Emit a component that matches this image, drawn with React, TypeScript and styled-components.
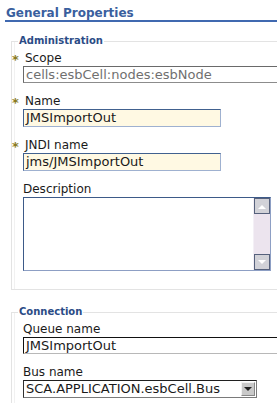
import React from "react";
import styled, { createGlobalStyle } from "styled-components";

const Global = createGlobalStyle`
  html, body {
    margin: 0;
    padding: 0;
    background: #ffffff;
    overflow: hidden;
  }
  body {
    font-family: "DejaVu Sans", Verdana, sans-serif;
    color: #1a1a1a;
  }
`;

const Page = styled.div`
  width: 277px;
  height: 403px;
  overflow: hidden;
`;

const Title = styled.h1`
  margin: 0 0 0 5px;
  padding: 6px 0 0 1px;
  font-size: 12px;
  line-height: 14px;
  font-weight: bold;
  color: #3a5f9e;
  border-bottom: 2px solid #4069b0;
`;

const Group = styled.fieldset<{ $top: number; $bottom: number }>`
  margin: ${(p) => p.$top}px 0 0 11px;
  padding: 4px 0 ${(p) => p.$bottom}px 11px;
  width: 300px;
  border: 1px solid #e3e3e3;
  border-right: none;
  box-shadow: inset 2px 0 0 #ffffff, inset 3px 0 0 #f1f1f1;
  min-width: 0;
`;

const Legend = styled.legend`
  margin-left: -5px;
  padding: 0 1px;
  font-size: 10px;
  line-height: 12px;
  font-weight: bold;
  color: #2b4c86;
`;

const Field = styled.div<{ $first?: boolean }>`
  display: flex;
  flex-direction: column;
  margin-top: ${(p) => (p.$first ? 0 : 11)}px;
`;

const Label = styled.label`
  display: block;
  font-size: 12px;
  line-height: 15px;
  height: 15px;
  color: #1a1a1a;
  white-space: nowrap;
`;

const Star = styled.span`
  display: inline-block;
  width: 13px;
  margin-left: -11px;
  color: #8a7b1d;
  font-weight: bold;
  font-size: 13px;
  vertical-align: -2px;
`;

const Input = styled.div<{
  $w?: number;
  $h: number;
  $bg: string;
  $color: string;
  $dark: string;
  $light: string;
}>`
  box-sizing: border-box;
  width: ${(p) => (p.$w ? `${p.$w}px` : "300px")};
  height: ${(p) => p.$h}px;
  background: ${(p) => p.$bg};
  border: 1px solid ${(p) => p.$light};
  border-top-color: ${(p) => p.$dark};
  border-left-color: ${(p) => p.$dark};
  padding: 0 0 0 2px;
  font-size: 13px;
  line-height: ${(p) => p.$h - 2}px;
  color: ${(p) => p.$color};
  white-space: nowrap;
  overflow: hidden;
`;

const AreaBox = styled.div`
  box-sizing: border-box;
  width: 248px;
  height: 74px;
  display: flex;
  border: 1px solid #8d9fc4;
  border-top-color: #3d5a88;
  border-left-color: #3d5a88;
  background: #ffffff;
`;

const Area = styled.textarea`
  flex: 1;
  border: none;
  margin: 0;
  padding: 0;
  resize: none;
  outline: none;
  background: #ffffff;
`;

const ScrollBar = styled.div`
  width: 16px;
  display: flex;
  flex-direction: column;
  justify-content: space-between;
  background: #ece4ee;
  border-left: 1px solid #f4f0f6;
`;

const ScrollButton = styled.div`
  box-sizing: border-box;
  width: 16px;
  height: 16px;
  border: 1px solid #56617c;
  background: #d2d2d8;
  display: flex;
  align-items: center;
  justify-content: center;
`;

const SelectBox = styled.div`
  box-sizing: border-box;
  width: 234px;
  height: 18px;
  display: flex;
  align-items: center;
  border: 1px solid #7a7a7a;
  border-top-color: #202020;
  border-left-color: #303030;
  background: #ffffff;
  padding: 0 1px 0 2px;
`;

const SelectText = styled.span`
  flex: 1;
  font-size: 13px;
  line-height: 16px;
  color: #1a1a1a;
  white-space: nowrap;
  overflow: hidden;
`;

const DropButton = styled.div`
  box-sizing: border-box;
  width: 14px;
  height: 14px;
  background: #c9c9c9;
  border: 1px solid #888;
  border-top-color: #f2f2f2;
  border-left-color: #f2f2f2;
  display: flex;
  align-items: center;
  justify-content: center;
`;

const Tri = ({ up, color }: { up?: boolean; color: string }) => (
  <svg width="8" height="5" viewBox="0 0 8 5">
    <path d={up ? "M0 5 L4 1 L8 5 Z" : "M0 0 L8 0 L4 4 Z"} fill={color} />
  </svg>
);

export default function App() {
  return (
    <Page>
      <Global />
      <Title>General Properties</Title>

      <Group $top={13} $bottom={18}>
        <Legend>Administration</Legend>
        <Field $first>
          <Label>
            <Star>*</Star>Scope
          </Label>
          <Input $h={17} $bg="#ffffff" $color="#707070" $dark="#6a6a6a" $light="#8c8c8c">
            cells:esbCell:nodes:esbNode
          </Input>
        </Field>
        <Field>
          <Label>
            <Star>*</Star>Name
          </Label>
          <Input $w={198} $h={18} $bg="#fff9e3" $color="#1a1a1a" $dark="#41618f" $light="#9fb1d0">
            JMSImportOut
          </Input>
        </Field>
        <Field>
          <Label>
            <Star>*</Star>JNDI name
          </Label>
          <Input $w={198} $h={18} $bg="#fff9e3" $color="#1a1a1a" $dark="#41618f" $light="#9fb1d0">
            jms/JMSImportOut
          </Input>
        </Field>
        <Field>
          <Label>Description</Label>
          <AreaBox>
            <Area />
            <ScrollBar>
              <ScrollButton>
                <Tri up color="#ffffff" />
              </ScrollButton>
              <ScrollButton>
                <Tri color="#ffffff" />
              </ScrollButton>
            </ScrollBar>
          </AreaBox>
        </Field>
      </Group>

      <Group $top={16} $bottom={10}>
        <Legend>Connection</Legend>
        <Field $first>
          <Label>Queue name</Label>
          <Input $h={17} $bg="#ffffff" $color="#1a1a1a" $dark="#111111" $light="#b8b8b8">
            JMSImportOut
          </Input>
        </Field>
        <Field>
          <Label>Bus name</Label>
          <SelectBox>
            <SelectText>SCA.APPLICATION.esbCell.Bus</SelectText>
            <DropButton>
              <Tri color="#222222" />
            </DropButton>
          </SelectBox>
        </Field>
      </Group>
    </Page>
  );
}
